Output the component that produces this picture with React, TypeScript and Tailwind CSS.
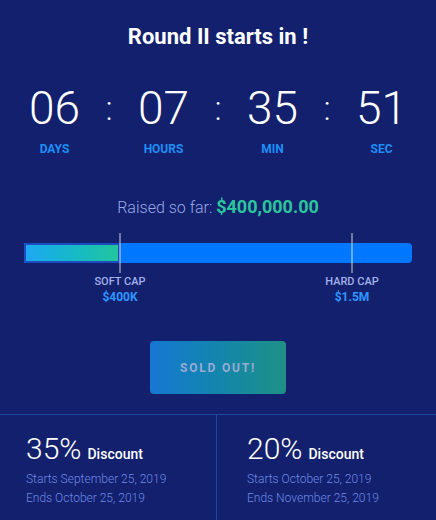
const units = [
	{ value: "06", label: "DAYS" },
	{ value: "07", label: "HOURS" },
	{ value: "35", label: "MIN" },
	{ value: "51", label: "SEC" },
];

const rounds = [
	{ pct: "35%", starts: "Starts September 25, 2019", ends: "Ends October 25, 2019", pad: "pl-[26px]" },
	{ pct: "20%", starts: "Starts October 25, 2019", ends: "Ends November 25, 2019", pad: "pl-[30px]" },
];

export default function App() {
	return (
		<div className="h-[520px] w-[436px] overflow-hidden bg-[#12206e] font-['Roboto',sans-serif] text-white">
			<h2 className="pt-[25px] text-center text-[22px] leading-[24px] font-bold">Round II starts in !</h2>

			{/* countdown */}
			<div className="mt-[36px] grid grid-cols-4">
				{units.map((u, i) => (
					<div key={u.label} className="relative flex flex-col items-center">
						<span className="text-[46px] leading-[46px] font-light">{u.value}</span>
						<span className="mt-[10px] text-[12px] leading-[16px] font-bold text-[#1e8ef5]">{u.label}</span>
						{i < 3 && (
							<span className="absolute top-0 right-0 translate-x-1/2 text-[34px] leading-[46px] font-light">:</span>
						)}
					</div>
				))}
			</div>

			<p className="mt-[40px] text-center text-[16px] leading-[20px] font-light text-[#9aa8e8]">
				Raised so far: <span className="text-[18px] font-bold text-[#2bc59b]">$400,000.00</span>
			</p>

			{/* progress */}
			<div className="relative mx-[24px] mt-[15px] h-[72px] pt-[10px]">
				<div className="flex h-[20px] overflow-hidden rounded-r-[4px] bg-[#0077ff]">
					<div className="h-full w-[96px] rounded-l-[2px] border-2 border-[#1b4cc0] bg-gradient-to-r from-[#1fa8f2] to-[#22c59c]" />
				</div>
				<div className="absolute top-0 left-[95px] h-[40px] w-[2px] bg-white/40" />
				<div className="absolute top-0 left-[327px] h-[40px] w-[2px] bg-white/40" />
				<div className="absolute top-[42px] left-[96px] flex -translate-x-1/2 flex-col items-center">
					<span className="text-[11px] leading-[14px] font-medium text-[#a4b1ea]">SOFT CAP</span>
					<span className="text-[12px] leading-[16px] font-bold text-[#2e96ff]">$400K</span>
				</div>
				<div className="absolute top-[42px] left-[328px] flex -translate-x-1/2 flex-col items-center">
					<span className="text-[11px] leading-[14px] font-medium text-[#a4b1ea]">HARD CAP</span>
					<span className="text-[12px] leading-[16px] font-bold text-[#2e96ff]">$1.5M</span>
				</div>
			</div>

			<div className="mt-[36px] flex justify-center">
				<button className="h-[53px] w-[136px] rounded-[4px] bg-gradient-to-r from-[#1877d2] to-[#1f9085] text-[12px] font-bold tracking-[1.8px] text-[#9aabd4]">
					SOLD OUT!
				</button>
			</div>

			{/* discount rounds */}
			<div className="mt-[20px] grid grid-cols-[217px_1fr] border-t border-[#1d47a3]">
				{rounds.map((r, i) => (
					<div key={r.pct} className={`${r.pad} h-[120px] pt-[16px] ${i === 0 ? "border-r border-[#1d47a3]" : ""}`}>
						<div className="flex items-baseline gap-[6px]">
							<span className="text-[30px] leading-[36px] font-light">{r.pct}</span>
							<span className="text-[14px] font-medium">Discount</span>
						</div>
						<p className="mt-[3px] text-[12px] leading-[19px] font-light text-[#7089e2]">{r.starts}</p>
						<p className="text-[12px] leading-[19px] font-light text-[#7089e2]">{r.ends}</p>
					</div>
				))}
			</div>
		</div>
	);
}
